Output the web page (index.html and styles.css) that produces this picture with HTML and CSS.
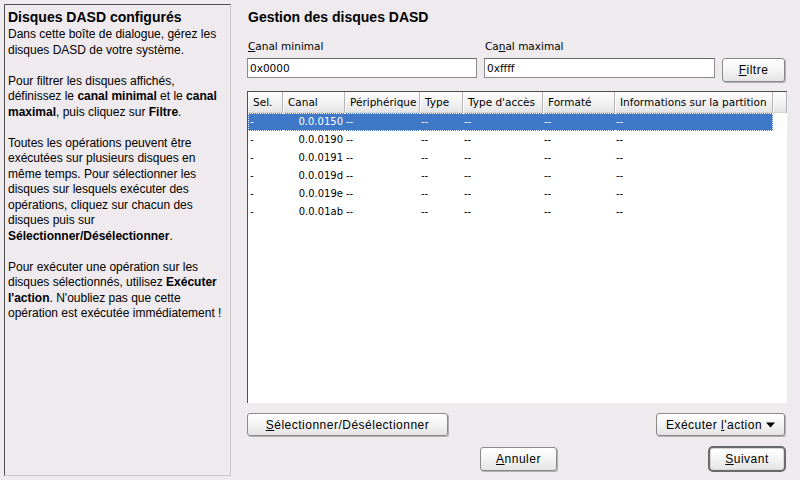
FILE: index.html
```html
<!DOCTYPE html>
<html lang="fr">
<head>
<meta charset="utf-8">
<title>Disques DASD configurés</title>
<link rel="stylesheet" href="styles.css">
</head>
<body>
<aside class="help">
  <h1 class="help-title">Disques DASD configurés</h1>
  <p>Dans cette boîte de dialogue, gérez les disques DASD de votre système.</p>
  <p>Pour filtrer les disques affichés, définissez le <b>canal minimal</b> et le <b>canal</b> <b>maximal</b>, puis cliquez sur <b>Filtre</b>.</p>
  <p>Toutes les opérations peuvent être exécutées sur plusieurs disques en même temps. Pour sélectionner les disques sur lesquels exécuter des opérations, cliquez sur chacun des disques puis sur <b>Sélectionner/Désélectionner</b>.</p>
  <p>Pour exécuter une opération sur les disques sélectionnés, utilisez <b>Exécuter</b> <b>l'action</b>. N'oubliez pas que cette opération est exécutée immédiatement !</p>
</aside>
<main class="main">
  <h2 class="title">Gestion des disques DASD</h2>
  <div class="filters">
    <div class="field f1">
      <label class="lbl"><u>C</u>anal minimal</label>
      <div class="input">0x0000</div>
    </div>
    <div class="field f2">
      <label class="lbl">Ca<u>n</u>al maximal</label>
      <div class="input">0xffff</div>
    </div>
    <button class="btn filtre"><span><u>F</u>iltre</span></button>
  </div>
  <div class="tablebox">
    <table class="grid">
      <colgroup>
        <col class="c1"><col class="c2"><col class="c3"><col class="c4"><col class="c5"><col class="c6"><col class="c7"><col class="c8">
      </colgroup>
      <thead>
        <tr><th>Sel.</th><th>Canal</th><th>Périphérique</th><th>Type</th><th>Type d'accès</th><th>Formaté</th><th>Informations sur la partition</th><th class="filler"></th></tr>
      </thead>
      <tbody>
        <tr class="sel"><td class="first">-</td><td class="num">0.0.0150</td><td>--</td><td>--</td><td>--</td><td>--</td><td class="last">--</td><td class="filler"></td></tr>
        <tr><td class="first">-</td><td class="num">0.0.0190</td><td>--</td><td>--</td><td>--</td><td>--</td><td class="last">--</td><td class="filler"></td></tr>
        <tr><td class="first">-</td><td class="num">0.0.0191</td><td>--</td><td>--</td><td>--</td><td>--</td><td class="last">--</td><td class="filler"></td></tr>
        <tr><td class="first">-</td><td class="num">0.0.019d</td><td>--</td><td>--</td><td>--</td><td>--</td><td class="last">--</td><td class="filler"></td></tr>
        <tr><td class="first">-</td><td class="num">0.0.019e</td><td>--</td><td>--</td><td>--</td><td>--</td><td class="last">--</td><td class="filler"></td></tr>
        <tr><td class="first">-</td><td class="num">0.0.01ab</td><td>--</td><td>--</td><td>--</td><td>--</td><td class="last">--</td><td class="filler"></td></tr>
      </tbody>
    </table>
  </div>
  <div class="actions">
    <button class="btn seldesel"><span><u>S</u>électionner/Désélectionner</span></button>
    <button class="btn exec"><span>Exécuter <u>l</u>'action</span><svg class="arrow" width="9" height="6" viewBox="0 0 9 6"><path d="M0 0.5H9L4.5 5.5Z" fill="#000"/></svg></button>
  </div>
  <div class="nav">
    <button class="btn annuler"><span><u>A</u>nnuler</span></button>
    <button class="btn suivant"><span><u>S</u>uivant</span></button>
  </div>
</main>
</body>
</html>
```
FILE: styles.css
```css
html, body {
  margin: 0;
  padding: 0;
}
body {
  width: 800px;
  height: 480px;
  box-sizing: border-box;
  padding: 4px 0 0 4px;
  background: #eeeaee;
  display: flex;
  align-items: flex-start;
  font-family: "Liberation Sans", Arial, sans-serif;
  color: #000;
  overflow: hidden;
}
.help {
  width: 227px;
  height: 472px;
  box-sizing: border-box;
  border: 1px solid;
  border-color: #505050 #c8c8c8 #c8c8c8 #505050;
  padding: 4px 3px 0 3px;
  font-size: 12px;
  line-height: 15.5px;
}
.help-title {
  font-size: 14px;
  line-height: 16px;
  font-weight: bold;
  margin: 0 0 2px 0;
}
.help p {
  margin: 0 0 15.5px 0;
}
.main {
  margin-left: 16px;
  width: 540px;
  display: flex;
  flex-direction: column;
  padding-top: 5px;
}
.title {
  font-size: 14px;
  line-height: 16px;
  font-weight: bold;
  margin: 0 0 0 1px;
}
.filters {
  display: flex;
  align-items: flex-end;
  margin-top: 14px;
}
.field {
  display: flex;
  flex-direction: column;
}
.f1 { width: 230px; }
.f2 { width: 231px; margin-left: 7px; }
.lbl {
  font-family: "DejaVu Sans", sans-serif;
  font-size: 10.5px;
  line-height: 14px;
  height: 14px;
  margin: 0 0 5px 1px;
}
.input {
  height: 20px;
  box-sizing: border-box;
  border: 1px solid #8c8c8c;
  border-top-color: #6a6a6a;
  background: #fff;
  font-family: "DejaVu Sans", sans-serif;
  font-size: 10.5px;
  line-height: 18px;
  padding-left: 2px;
  margin-bottom: 4px;
}
.btn {
  font-family: "Liberation Sans", Arial, sans-serif;
  font-size: 12px;
  letter-spacing: 0.5px;
  color: #000;
  background: linear-gradient(#ffffff, #f4f4f4 50%, #e4e4e4);
  border: 1px solid #8a8a8a;
  border-radius: 3px;
  box-shadow: 1px 1px 0 #b0b0b0;
  padding: 0;
  margin: 0;
  display: flex;
  align-items: center;
  justify-content: center;
}
.btn u { text-underline-offset: 1px; }
.filtre {
  width: 63px;
  height: 24px;
  margin-left: 7px;
}
.tablebox {
  margin-top: 9px;
  height: 312px;
  box-sizing: border-box;
  background: #fff;
  border-left: 1px solid #505050;
  border-top: 1px solid #505050;
}
.grid {
  table-layout: fixed;
  border-collapse: separate;
  border-spacing: 0;
  width: 539px;
  font-family: "DejaVu Sans", sans-serif;
  font-size: 10px;
}
.c1 { width: 35px; }
.c2 { width: 62px; }
.c3 { width: 75px; }
.c4 { width: 43px; }
.c5 { width: 80px; }
.c6 { width: 72px; }
.c7 { width: 158px; }
.c8 { width: 14px; }
.grid th {
  height: 20px;
  padding: 0 0 0 5px;
  text-align: left;
  font-weight: normal;
  font-size: 10.5px;
  white-space: nowrap;
  overflow: hidden;
  background: linear-gradient(#fdfdfd, #f3f3f3 50%, #e4e4e4);
  border-right: 1px solid #b4b4b4;
  border-bottom: 1px solid #d4d4d4;
  box-shadow: inset 1px 0 0 #ffffff;
}
.grid td {
  height: 16px;
  padding: 0 0 0 1px;
  white-space: nowrap;
  overflow: hidden;
  border-top: 1px solid transparent;
  border-bottom: 1px solid transparent;
  line-height: 16px;
}
.grid td.first { padding-left: 1px; border-left: 1px solid transparent; }
.grid td.last { border-right: 1px solid transparent; }
.grid td.num {
  text-align: right;
  padding: 0 2px 0 0;
}
.grid tr.sel td {
  background: #4078c8;
  color: #fff;
  border-top: 1px dotted #fff;
  border-bottom: 1px dotted #fff;
}
.grid tr.sel td.first { border-left: 1px dotted #fff; }
.grid tr.sel td.last { border-right: 1px dotted #fff; }
.grid tr.sel td.filler {
  background: #fff;
  border-color: transparent;
}
.actions {
  display: flex;
  justify-content: space-between;
  margin-top: 10px;
  padding-right: 2px;
}
.seldesel {
  width: 201px;
  height: 23px;
}
.exec {
  width: 129px;
  height: 23px;
  gap: 4px;
}
.arrow { display: block; }
.nav {
  display: flex;
  align-items: center;
  margin-top: 10px;
  padding-right: 1px;
}
.annuler {
  width: 77px;
  height: 24px;
  margin-left: 233px;
}
.suivant {
  width: 78px;
  height: 26px;
  margin-left: auto;
  border: 2px solid #6a6a6a;
  border-radius: 5px;
  box-shadow: inset 0 0 0 1px #d8d8d8;
}
```
